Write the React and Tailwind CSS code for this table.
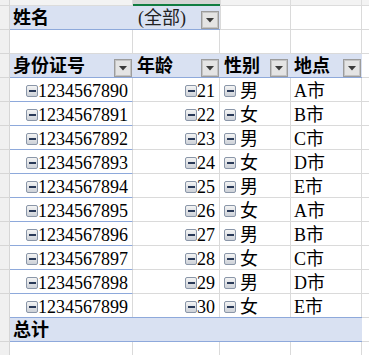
import React from "react";

const rows = Array.from({ length: 10 }, (_, i) => ({
  id: String(1234567890 + i),
  age: 21 + i,
  sex: i % 2 === 0 ? "男" : "女",
  city: ["A", "B", "C", "D", "E"][i % 5] + "市",
}));

function MinusBox() {
  return (
    <span className="flex w-[12px] h-[12px] shrink-0 items-center justify-center rounded-[2px] border border-[#8a96a8] bg-linear-to-b from-[#f4f4f4] to-[#cdd1d8]">
      <span className="w-[7px] h-[2px] bg-[#2a3a58]" />
    </span>
  );
}

function Drop({ extra = "" }) {
  return (
    <span
      className={
        "flex w-[18px] h-[18px] shrink-0 items-center justify-center border border-[#9c9c9c] bg-[#e4e4e4] shadow-[inset_0_0_0_1px_#c4c4c4] " +
        extra
      }
    >
      <svg width="8" height="5" viewBox="0 0 8 5">
        <path d="M0 0H8L4 4.5Z" fill="#3a3a3a" />
      </svg>
    </span>
  );
}

function Gutter({ h = "h-[24px]" }) {
  return <div className={"w-[10px] shrink-0 bg-[#f0f0f0] border-r border-b border-[#d6d6d6] " + h} />;
}

export default function App() {
  return (
    <div className="w-[369px] h-[355px] overflow-hidden bg-white text-black text-[18px] font-['Liberation_Serif','Noto_Sans_CJK_SC',serif]">
      {/* column header strip */}
      <div className="flex h-[6px]">
        <div className="w-[10px] shrink-0 bg-[#f0f0f0] border-r border-b border-[#d6d6d6]" />
        <div className="w-[123px] shrink-0 bg-[#f3f3f3] border-r border-b border-[#dcdcdc]" />
        <div className="w-[87px] shrink-0 bg-[#d4d4d4] border-b-2 border-[#107c41]" />
        <div className="w-[71px] shrink-0 bg-[#f3f3f3] border-r border-l border-b border-[#dcdcdc]" />
        <div className="w-[71px] shrink-0 bg-[#f3f3f3] border-r border-b border-[#dcdcdc]" />
        <div className="flex-1 bg-[#f3f3f3] border-b border-[#dcdcdc]" />
      </div>

      {/* 姓名 filter row */}
      <div className="flex h-[24px]">
        <Gutter />
        <div className="flex w-[210px] shrink-0 h-[24px] bg-[#d9e1f2] border-b border-[#8ea9db]">
          <div className="w-[123px] shrink-0 pl-[3px] pt-[2px] leading-[21px] font-bold">姓名</div>
          <div className="flex flex-1 items-end justify-between pr-[1px]">
            <span className="self-start pl-[5px] pt-[2px] leading-[21px] text-[#222]">(全部)</span>
            <Drop />
          </div>
        </div>
        <div className="w-[71px] shrink-0 border-l border-r border-b border-[#dadada]" />
        <div className="w-[71px] shrink-0 border-r border-b border-[#dadada]" />
        <div className="flex-1 border-b border-[#dadada]" />
      </div>

      {/* blank row */}
      <div className="flex h-[24px]">
        <Gutter />
        <div className="w-[123px] shrink-0 border-r border-b border-[#dadada]" />
        <div className="w-[87px] shrink-0 border-r border-b border-[#dadada]" />
        <div className="w-[71px] shrink-0 border-r border-b border-[#dadada]" />
        <div className="w-[71px] shrink-0 border-r border-b border-[#dadada]" />
        <div className="flex-1 border-b border-[#dadada]" />
      </div>

      {/* header row */}
      <div className="flex h-[24px]">
        <Gutter />
        <div className="flex w-[352px] shrink-0 bg-[#d9e1f2] border-b border-[#8ea9db] font-bold">
          <div className="flex w-[123px] shrink-0 items-end justify-between pl-[3px] pr-[1px]">
            <span className="self-start pt-[2px] leading-[21px]">身份证号</span>
            <Drop />
          </div>
          <div className="flex w-[87px] shrink-0 items-end justify-between pl-[4px] pr-[1px]">
            <span className="self-start pt-[2px] leading-[21px]">年龄</span>
            <Drop />
          </div>
          <div className="flex w-[71px] shrink-0 items-end justify-between pl-[4px] pr-[3px]">
            <span className="self-start pt-[2px] leading-[21px]">性别</span>
            <Drop />
          </div>
          <div className="flex w-[71px] shrink-0 items-end justify-between pl-[3px] pr-[1px]">
            <span className="self-start pt-[2px] leading-[21px]">地点</span>
            <Drop />
          </div>
        </div>
        <div className="flex-1 border-b border-[#dadada]" />
      </div>

      {/* data rows */}
      {rows.map((r) => (
        <div key={r.id} className="flex h-[24px]">
          <Gutter />
          <div className="flex w-[123px] shrink-0 items-start pl-[16px] border-r border-b border-r-[#dadada] border-b-[#8ea9db]">
            <span className="mt-[7px]">
              <MinusBox />
            </span>
            <span className="pt-[3px] leading-[20px]">{r.id}</span>
          </div>
          <div className="flex w-[87px] shrink-0 items-start justify-end pr-[4px] border-r border-b border-[#dadada]">
            <span className="mt-[7px]">
              <MinusBox />
            </span>
            <span className="pt-[3px] leading-[20px]">{r.age}</span>
          </div>
          <div className="flex w-[71px] shrink-0 items-start pl-[4px] border-r border-b border-[#dadada]">
            <span className="mt-[7px] mr-[4px]">
              <MinusBox />
            </span>
            <span className="pt-[3px] leading-[20px]">{r.sex}</span>
          </div>
          <div className="flex w-[71px] shrink-0 items-start pl-[3px] border-r border-b border-[#dadada]">
            <span className="pt-[3px] leading-[20px]">{r.city}</span>
          </div>
          <div className="flex-1 border-b border-[#dadada]" />
        </div>
      ))}

      {/* total row */}
      <div className="flex h-[24px] -mt-px">
        <Gutter h="h-[25px]" />
        <div className="w-[352px] shrink-0 h-[25px] bg-[#d9e1f2] border-t border-b border-[#8ea9db] pl-[3px] pt-[2px] leading-[21px] font-bold">
          总计
        </div>
        <div className="flex-1 h-[25px] border-b border-[#dadada]" />
      </div>

      {/* trailing row */}
      <div className="flex h-[24px] mt-px">
        <Gutter />
        <div className="w-[123px] shrink-0 border-r border-[#dadada]" />
        <div className="w-[87px] shrink-0 border-r border-[#dadada]" />
        <div className="w-[71px] shrink-0 border-r border-[#dadada]" />
        <div className="w-[71px] shrink-0 border-r border-[#dadada]" />
        <div className="flex-1" />
      </div>
    </div>
  );
}
